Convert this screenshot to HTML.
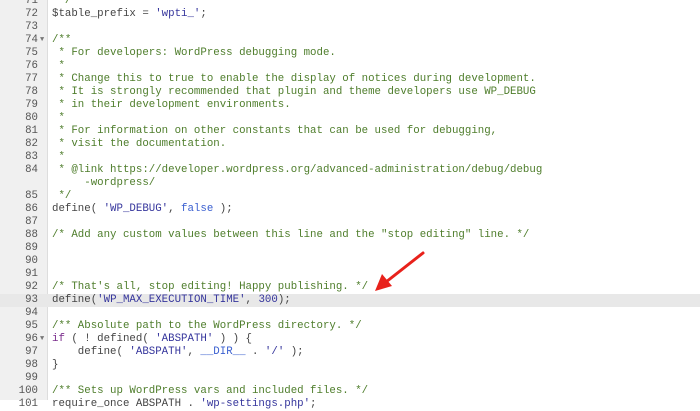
<!DOCTYPE html>
<html><head><style>
body{margin:0;width:700px;height:400px;overflow:hidden;background:#fff;position:relative;font-family:"Liberation Mono","DejaVu Sans Mono",monospace;font-size:10.75px;}
#g{position:absolute;left:0;top:0;width:47px;height:400px;background:#f0f0f0;border-right:1px solid #ddd;}
#c{position:absolute;left:0;top:-5.5px;width:700px;}
.r{height:13px;line-height:13px;white-space:pre;position:relative;}
.n{position:absolute;left:0;width:38px;text-align:right;color:#555;}
.t{position:absolute;left:52px;color:#444;}
.h{background:#e8e8e8;}
.f{position:absolute;left:40px;font-size:7px;color:#777;}
.cm{color:#4e7d2b}.s{color:#35359c}.k{color:#7a2c8c}.b{color:#3a5fd0}.v{color:#444}
</style></head><body>
<div id="g"></div>
<div id="c">
<div class="r"><span class="n">71</span><span class="t cm"> */</span></div>
<div class="r"><span class="n">72</span><span class="t">$table_prefix = <span class="s">'wpti_'</span>;</span></div>
<div class="r"><span class="n">73</span></div>
<div class="r"><span class="n">74</span><span class="f">▼</span><span class="t cm">/**</span></div>
<div class="r"><span class="n">75</span><span class="t cm"> * For developers: WordPress debugging mode.</span></div>
<div class="r"><span class="n">76</span><span class="t cm"> *</span></div>
<div class="r"><span class="n">77</span><span class="t cm"> * Change this to true to enable the display of notices during development.</span></div>
<div class="r"><span class="n">78</span><span class="t cm"> * It is strongly recommended that plugin and theme developers use WP_DEBUG</span></div>
<div class="r"><span class="n">79</span><span class="t cm"> * in their development environments.</span></div>
<div class="r"><span class="n">80</span><span class="t cm"> *</span></div>
<div class="r"><span class="n">81</span><span class="t cm"> * For information on other constants that can be used for debugging,</span></div>
<div class="r"><span class="n">82</span><span class="t cm"> * visit the documentation.</span></div>
<div class="r"><span class="n">83</span><span class="t cm"> *</span></div>
<div class="r"><span class="n">84</span><span class="t cm"> * @link https://developer.wordpress.org/advanced-administration/debug/debug</span></div>
<div class="r"><span class="t cm">     -wordpress/</span></div>
<div class="r"><span class="n">85</span><span class="t cm"> */</span></div>
<div class="r"><span class="n">86</span><span class="t">define( <span class="s">'WP_DEBUG'</span>, <span class="b">false</span> );</span></div>
<div class="r"><span class="n">87</span></div>
<div class="r"><span class="n">88</span><span class="t cm">/* Add any custom values between this line and the "stop editing" line. */</span></div>
<div class="r"><span class="n">89</span></div>
<div class="r"><span class="n">90</span></div>
<div class="r"><span class="n">91</span></div>
<div class="r"><span class="n">92</span><span class="t cm">/* That's all, stop editing! Happy publishing. */</span></div>
<div class="r h"><span class="n">93</span><span class="t">define(<span class="s">'WP_MAX_EXECUTION_TIME'</span>, <span class="s">300</span>);</span></div>
<div class="r"><span class="n">94</span></div>
<div class="r"><span class="n">95</span><span class="t cm">/** Absolute path to the WordPress directory. */</span></div>
<div class="r"><span class="n">96</span><span class="f">▼</span><span class="t"><span class="k">if</span> ( ! defined( <span class="s">'ABSPATH'</span> ) ) {</span></div>
<div class="r"><span class="n">97</span><span class="t">    define( <span class="s">'ABSPATH'</span>, <span class="b">__DIR__</span> . <span class="s">'/'</span> );</span></div>
<div class="r"><span class="n">98</span><span class="t">}</span></div>
<div class="r"><span class="n">99</span></div>
<div class="r"><span class="n">100</span><span class="t cm">/** Sets up WordPress vars and included files. */</span></div>
<div class="r"><span class="n">101</span><span class="t">require_once ABSPATH . <span class="s">'wp-settings.php'</span>;</span></div>
</div>
<svg style="position:absolute;left:0;top:0" width="700" height="400">
<line x1="423" y1="253" x2="386" y2="282" stroke="#e8211b" stroke-width="3" stroke-linecap="round"/>
<polygon points="375,291 382,274 392,286" fill="#e8211b"/>
</svg>
</body></html>
